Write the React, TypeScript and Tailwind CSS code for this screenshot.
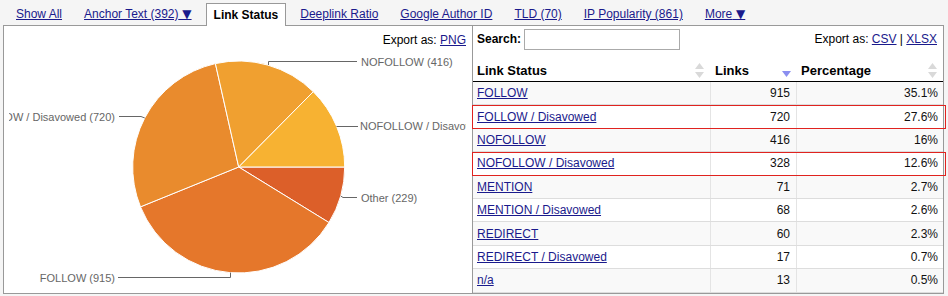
import React from "react";

const LINK = "text-[#1a1a8c] underline";

const tabs = [
  { label: "Show All" },
  { label: "Anchor Text (392)", arrow: true },
  { label: "Link Status", active: true },
  { label: "Deeplink Ratio" },
  { label: "Google Author ID" },
  { label: "TLD (70)" },
  { label: "IP Popularity (861)" },
  { label: "More", arrow: true },
];

const rows = [
  ["FOLLOW", "915", "35.1%"],
  ["FOLLOW / Disavowed", "720", "27.6%", true],
  ["NOFOLLOW", "416", "16%"],
  ["NOFOLLOW / Disavowed", "328", "12.6%", true],
  ["MENTION", "71", "2.7%"],
  ["MENTION / Disavowed", "68", "2.6%"],
  ["REDIRECT", "60", "2.3%"],
  ["REDIRECT / Disavowed", "17", "0.7%"],
  ["n/a", "13", "0.5%"],
] as const;

const CX = 238.7;
const CY = 167;
const R = 106;

const slices = [
  { v: 229, c: "#dc5f29" },
  { v: 915, c: "#e5772b" },
  { v: 720, c: "#e98b2d" },
  { v: 416, c: "#f0a030" },
  { v: 328, c: "#f7b232" },
];

function pt(deg: number): [number, number] {
  const a = (deg * Math.PI) / 180;
  return [CX + R * Math.sin(a), CY - R * Math.cos(a)];
}

function Pie() {
  const total = slices.reduce((s, x) => s + x.v, 0);
  let start = 90;
  const paths = slices.map((s, i) => {
    const sweep = (s.v / total) * 360;
    const end = start + sweep;
    const [x0, y0] = pt(start);
    const [x1, y1] = pt(end);
    const large = sweep > 180 ? 1 : 0;
    const d = `M ${CX} ${CY} L ${x0} ${y0} A ${R} ${R} 0 ${large} 1 ${x1} ${y1} Z`;
    start = end;
    return <path key={i} d={d} fill={s.c} stroke="#ffffff" strokeWidth={1} />;
  });
  const lbl = { fontSize: 11, fill: "#666666", fontFamily: "'Liberation Sans', Arial, sans-serif" };
  return (
    <svg width={457} height={238} viewBox="9 54 457 238" className="block ml-[5px]">
      {paths}
      <g stroke="#666666" strokeWidth={1} fill="none">
        <polyline points="268.5,65 268.5,61.5 357,61.5" />
        <polyline points="336.5,126.5 358,126.5" />
        <polyline points="340.7,196 343,197.5 357,197.5" />
        <polyline points="230.5,272.6 230.5,277.5 118,277.5" />
        <polyline points="144.8,118 141,116.5 119,116.5" />
      </g>
      <text x={361} y={65.9} style={lbl}>NOFOLLOW (416)</text>
      <text x={360} y={130.2} style={lbl}>NOFOLLOW / Disavowed (328)</text>
      <text x={361} y={201.6} style={lbl}>Other (229)</text>
      <text x={115} y={281.6} textAnchor="end" style={lbl}>FOLLOW (915)</text>
      <text x={115} y={120.8} textAnchor="end" style={lbl}>FOLLOW / Disavowed (720)</text>
    </svg>
  );
}

function SortBoth() {
  return (
    <svg width={9} height={15} viewBox="0 0 9 15" className="block shrink-0">
      <polygon points="0,6 4.5,0 9,6" fill="#d9d9d9" />
      <polygon points="0,9 4.5,15 9,9" fill="#d9d9d9" />
    </svg>
  );
}

function SortDown() {
  return (
    <svg width={9} height={6} viewBox="0 0 9 6" className="block shrink-0 mb-[1px]">
      <polygon points="0,0 9,0 4.5,6" fill="#8b8ff0" />
    </svg>
  );
}

export default function App() {
  return (
    <div className="w-[948px] h-[296px] bg-[#f5f5f5] font-['Liberation_Sans',Arial,sans-serif] text-[12px] text-black overflow-hidden">
      {/* Tabs */}
      <div className="flex h-[25px] items-end pl-[8px] gap-[6px]">
        {tabs.map((t) =>
          t.active ? (
            <div
              key={t.label}
              className="relative z-10 -mb-px h-[23px] px-[7px] flex items-center bg-white border border-b-0 border-[#999] font-bold text-black"
            >
              {t.label}
            </div>
          ) : (
            <div key={t.label} className="h-[22px] px-[8px] flex items-center">
              <span className={LINK}>
                {t.label}
                {t.arrow && (
                  <span className="font-['DejaVu_Sans',sans-serif] text-[12px]"> ▼</span>
                )}
              </span>
            </div>
          )
        )}
      </div>

      {/* Panel */}
      <div className="ml-[3px] w-[941px] h-[269px] border border-[#999] bg-white flex">
        {/* Chart */}
        <div className="w-[468px] shrink-0 flex flex-col border-r border-[#999] box-content">
          <div className="h-[28px] flex items-center justify-end pr-[6px]">
            Export as:&nbsp;<span className={LINK}>PNG</span>
          </div>
          <Pie />
        </div>

        {/* Table */}
        <div className="w-[470px] shrink-0 flex flex-col">
          <div className="h-[26px] flex items-center pl-[4px] pr-[6px]">
            <span className="font-bold">Search:</span>
            <div className="ml-[3px] w-[156px] h-[21px] border border-[#aaa] bg-white" />
            <div className="flex-1" />
            <span>
              Export as:&nbsp;<span className={LINK}>CSV</span> | <span className={LINK}>XLSX</span>
            </span>
          </div>
          <div className="h-[30px] grid grid-cols-[238px_86px_146px] border-b border-black text-[13px] font-bold">
            <div className="flex items-end justify-between pl-[4px] pr-[7px] pb-[3px] leading-[15px]">
              <span>Link Status</span>
              <SortBoth />
            </div>
            <div className="flex items-end justify-between pl-[4px] pr-[6px] pb-[3px] leading-[15px]">
              <span>Links</span>
              <SortDown />
            </div>
            <div className="flex items-end justify-between pl-[4px] pr-[6px] pb-[3px] leading-[15px]">
              <span>Percentage</span>
              <SortBoth />
            </div>
          </div>
          {rows.map((r, i) => (
            <div
              key={r[0]}
              className={`relative h-[23.4px] grid grid-cols-[238px_86px_146px] border-b border-[#dddddd] ${
                i % 2 === 0 ? "bg-[#f9f9f9]" : "bg-white"
              }`}
            >
              <div className="flex items-center pl-[4px] border-r border-[#e4e4e4]">
                <span className={LINK}>{r[0]}</span>
              </div>
              <div className="flex items-center justify-end pr-[6px] border-r border-[#e4e4e4] text-[#111]">
                {r[1]}
              </div>
              <div className="flex items-center justify-end pr-[5px] text-[#111]">{r[2]}</div>
              {r[3] && (
                <div className="absolute -left-px -right-[3px] top-0 -bottom-px border border-[#e0231f] pointer-events-none" />
              )}
            </div>
          ))}
        </div>
      </div>
    </div>
  );
}
